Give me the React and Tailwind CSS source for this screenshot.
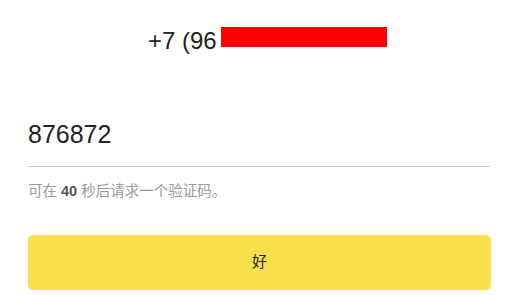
export default function App() {
    return (
        <div className="w-[506px] h-[295px] bg-white overflow-hidden font-['Liberation_Sans','Noto_Sans_CJK_SC',sans-serif] text-[#222]">
            <div className="pt-[26px] pl-[148px] flex items-start">
                <span className="block w-[73px] whitespace-nowrap text-[24px] leading-[30px]">+7 (96</span>
                <span className="block mt-[1px] w-[166px] h-[20px] bg-[#ff0000]"></span>
            </div>

            <div className="mx-[28px] w-[462px]">
                <div className="mt-[62px] pb-[15px] border-b border-[#cccccc]">
                    <div className="text-[25px] leading-[33px]">876872</div>
                </div>

                <p className="mt-[14px] text-[14.5px] leading-[20px] text-[#999]">
                    可在 <span className="text-[#555] font-semibold">40</span> 秒后请求一个验证码。
                </p>
            </div>

            <button
                type="button"
                className="mt-[34px] ml-[28px] w-[463px] h-[55px] rounded-[5px] bg-[#f8e04c] flex items-center justify-center text-[15px] text-[#222]"
            >
                好
            </button>
        </div>
    )
}
